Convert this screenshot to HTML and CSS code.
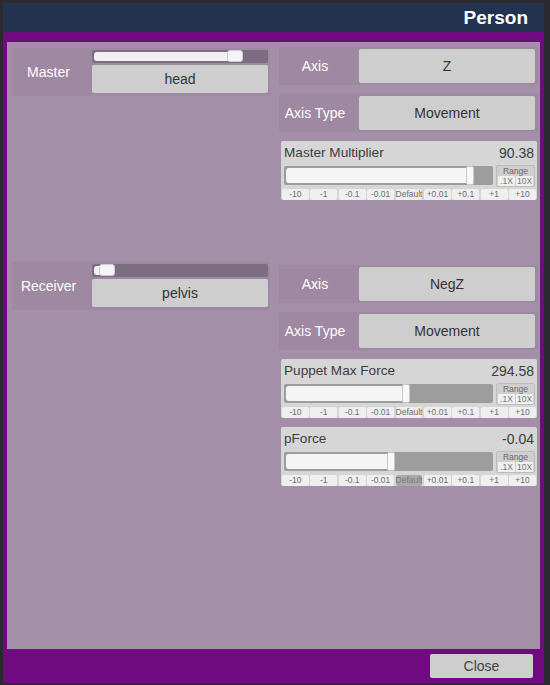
FILE: index.html
```html
<!DOCTYPE html>
<html>
<head>
<meta charset="utf-8">
<link rel="stylesheet" href="styles.css">
</head>
<body>
<div class="window">
  <div class="titlebar"><span class="title">Person</span></div>
  <div class="frame">
    <div class="content">
      <div class="grid">
        <div class="link-panel first">
          <div class="link-label">Master</div>
          <div class="link-controls">
            <div class="mini-slider"><div class="mini-fill" style="width:134px"></div><div class="mini-handle"></div></div>
            <div class="btn link-btn">head</div>
          </div>
        </div>
        <div class="group first">
          <div class="row"><div class="row-label">Axis</div><div class="btn row-btn">Z</div></div>
          <div class="row"><div class="row-label">Axis Type</div><div class="btn row-btn">Movement</div></div>
          <div class="slider-panel">
            <div class="sp-head"><span class="sp-title">Master Multiplier</span><span class="sp-value">90.38</span></div>
            <div class="sp-controls">
              <div class="track"><div class="fill" style="width:180px"></div><div class="handle"></div></div>
              <div class="range"><div class="range-label">Range</div><div class="range-btns"><span class="rbtn">.1X</span><span class="rbtn">10X</span></div></div>
            </div>
            <div class="steps"><span class="step">-10</span><span class="step">-1</span><span class="step">-0.1</span><span class="step">-0.01</span><span class="step">Default</span><span class="step">+0.01</span><span class="step">+0.1</span><span class="step">+1</span><span class="step">+10</span></div>
          </div>
        </div>

        <div class="link-panel">
          <div class="link-label">Receiver</div>
          <div class="link-controls">
            <div class="mini-slider"><div class="mini-fill" style="width:6px"></div><div class="mini-handle"></div></div>
            <div class="btn link-btn">pelvis</div>
          </div>
        </div>
        <div class="group second">
          <div class="row"><div class="row-label">Axis</div><div class="btn row-btn">NegZ</div></div>
          <div class="row"><div class="row-label">Axis Type</div><div class="btn row-btn">Movement</div></div>
          <div class="slider-panel">
            <div class="sp-head"><span class="sp-title">Puppet Max Force</span><span class="sp-value">294.58</span></div>
            <div class="sp-controls">
              <div class="track"><div class="fill" style="width:116px"></div><div class="handle"></div></div>
              <div class="range"><div class="range-label">Range</div><div class="range-btns"><span class="rbtn">.1X</span><span class="rbtn">10X</span></div></div>
            </div>
            <div class="steps"><span class="step">-10</span><span class="step">-1</span><span class="step">-0.1</span><span class="step">-0.01</span><span class="step">Default</span><span class="step">+0.01</span><span class="step">+0.1</span><span class="step">+1</span><span class="step">+10</span></div>
          </div>
          <div class="slider-panel">
            <div class="sp-head"><span class="sp-title">pForce</span><span class="sp-value">-0.04</span></div>
            <div class="sp-controls">
              <div class="track"><div class="fill" style="width:101px"></div><div class="handle"></div></div>
              <div class="range"><div class="range-label">Range</div><div class="range-btns"><span class="rbtn">.1X</span><span class="rbtn">10X</span></div></div>
            </div>
            <div class="steps"><span class="step">-10</span><span class="step">-1</span><span class="step">-0.1</span><span class="step">-0.01</span><span class="step active">Default</span><span class="step">+0.01</span><span class="step">+0.1</span><span class="step">+1</span><span class="step">+10</span></div>
          </div>
        </div>
      </div>
    </div>
    <div class="footer"><div class="btn close-btn">Close</div></div>
  </div>
</div>
</body>
</html>
```

FILE: styles.css
```css
html, body {
  margin: 0;
  padding: 0;
}
body {
  background: #2b2a30;
  width: 550px;
  height: 685px;
  overflow: hidden;
  font-family: "Liberation Sans", Arial, sans-serif;
}
.window {
  margin: 3px 6px 0 3px;
  width: 541px;
  height: 680px;
  display: flex;
  flex-direction: column;
}
.titlebar {
  height: 29px;
  background: #22324f;
  display: flex;
  align-items: center;
  justify-content: flex-end;
  padding-right: 16px;
}
.title {
  color: #ffffff;
  font-weight: bold;
  font-size: 19px;
}
.frame {
  flex: 1;
  background: #6f0a80;
  padding: 10px 4px 0 4px;
  display: flex;
  flex-direction: column;
}
.content {
  height: 607px;
  box-sizing: border-box;
  background: #a48fa8;
  padding: 5px 2px 0 5px;
}
.grid {
  display: grid;
  grid-template-columns: 258px 259px;
  grid-template-rows: 215px auto;
  column-gap: 9px;
}
.btn {
  background: #cecece;
  border-radius: 2px;
  color: #333333;
  font-size: 14px;
  display: flex;
  align-items: center;
  justify-content: center;
}
.link-panel {
  align-self: start;
  display: flex;
  background: #9e88a2;
  padding: 2px 2px 3px 0;
  border-radius: 2px;
}
.link-panel.first {
  margin-top: 1px;
}
.link-label {
  width: 73px;
  margin-right: 7px;
  color: #ffffff;
  font-size: 14px;
  display: flex;
  align-items: center;
  justify-content: center;
}
.link-controls {
  width: 176px;
  display: flex;
  flex-direction: column;
  gap: 2px;
}
.mini-slider {
  height: 13px;
  box-sizing: border-box;
  background: #7d6d80;
  border-radius: 2px;
  padding: 2px;
  display: flex;
}
.mini-fill {
  background: #f1f1f3;
  border-radius: 3px 0 0 3px;
}
.mini-handle {
  width: 16px;
  margin: -2px 0 -1px -1px;
  background: #f4f4f6;
  border: 1px solid #d0cdd2;
  box-sizing: border-box;
  border-radius: 3px;
}
.link-btn {
  height: 28px;
}
.group {
  display: flex;
  flex-direction: column;
  gap: 9px;
}
.group.second {
  margin-top: 3px;
}
.row {
  display: flex;
  height: 38px;
  box-sizing: border-box;
  background: #9e88a2;
  padding: 2px 3px 2px 0;
  border-radius: 2px;
}
.row-label {
  width: 72px;
  margin-right: 8px;
  color: #ffffff;
  font-size: 14px;
  display: flex;
  align-items: center;
  justify-content: center;
}
.row-btn {
  width: 176px;
}
.slider-panel {
  margin: 0 1px 0 2px;
  height: 59px;
  box-sizing: border-box;
  background: #d6d6d6;
  border-radius: 2px;
  padding: 0 1px 0 3px;
  display: flex;
  flex-direction: column;
}
.sp-head {
  height: 23px;
  display: flex;
  justify-content: space-between;
  align-items: center;
  color: #3d3d3d;
  padding-right: 2px;
}
.sp-title {
  font-size: 13.6px;
}
.sp-value {
  font-size: 14px;
}
.sp-controls {
  display: flex;
  gap: 3px;
  height: 24px;
}
.track {
  width: 209px;
  height: 19px;
  margin-top: 2px;
  box-sizing: border-box;
  background: #9d9d9d;
  border-radius: 2px;
  padding: 2px;
  display: flex;
}
.fill {
  background: #f5f5f5;
  border-radius: 3px 0 0 3px;
}
.handle {
  width: 8px;
  margin: -2px 0 -2px 0;
  background: #f7f7f7;
  border: 1px solid #c8c8c8;
  box-sizing: border-box;
  border-radius: 2px;
}
.range {
  width: 39px;
  height: 22px;
  margin-top: 1px;
  box-sizing: border-box;
  background: #cfcfcf;
  border: 1px solid #bdbdbd;
  border-radius: 2px;
  display: flex;
  flex-direction: column;
  align-items: center;
}
.range-label {
  font-size: 8.5px;
  color: #6a6a6a;
  line-height: 10px;
}
.range-btns {
  display: flex;
  gap: 1px;
}
.rbtn {
  font-size: 8.5px;
  color: #777777;
  background: #f0f0f0;
  line-height: 10px;
  width: 17px;
  text-align: center;
  border-radius: 1px;
}
.steps {
  display: grid;
  grid-template-columns: repeat(9, 1fr);
  gap: 1.5px;
  margin: 1px 0 0 -2px;
  height: 11px;
}
.step {
  background: #efefef;
  border-radius: 2px;
  font-size: 8.5px;
  color: #6e6e6e;
  line-height: 11px;
  text-align: center;
}
.step.active {
  background: #aaaaaa;
  color: #7a7a7a;
}
.footer {
  height: 34px;
  box-sizing: border-box;
  display: flex;
  justify-content: flex-end;
  align-items: flex-start;
  padding: 5px 7px 0 0;
}
.close-btn {
  width: 103px;
  height: 24px;
  color: #444444;
}
```
